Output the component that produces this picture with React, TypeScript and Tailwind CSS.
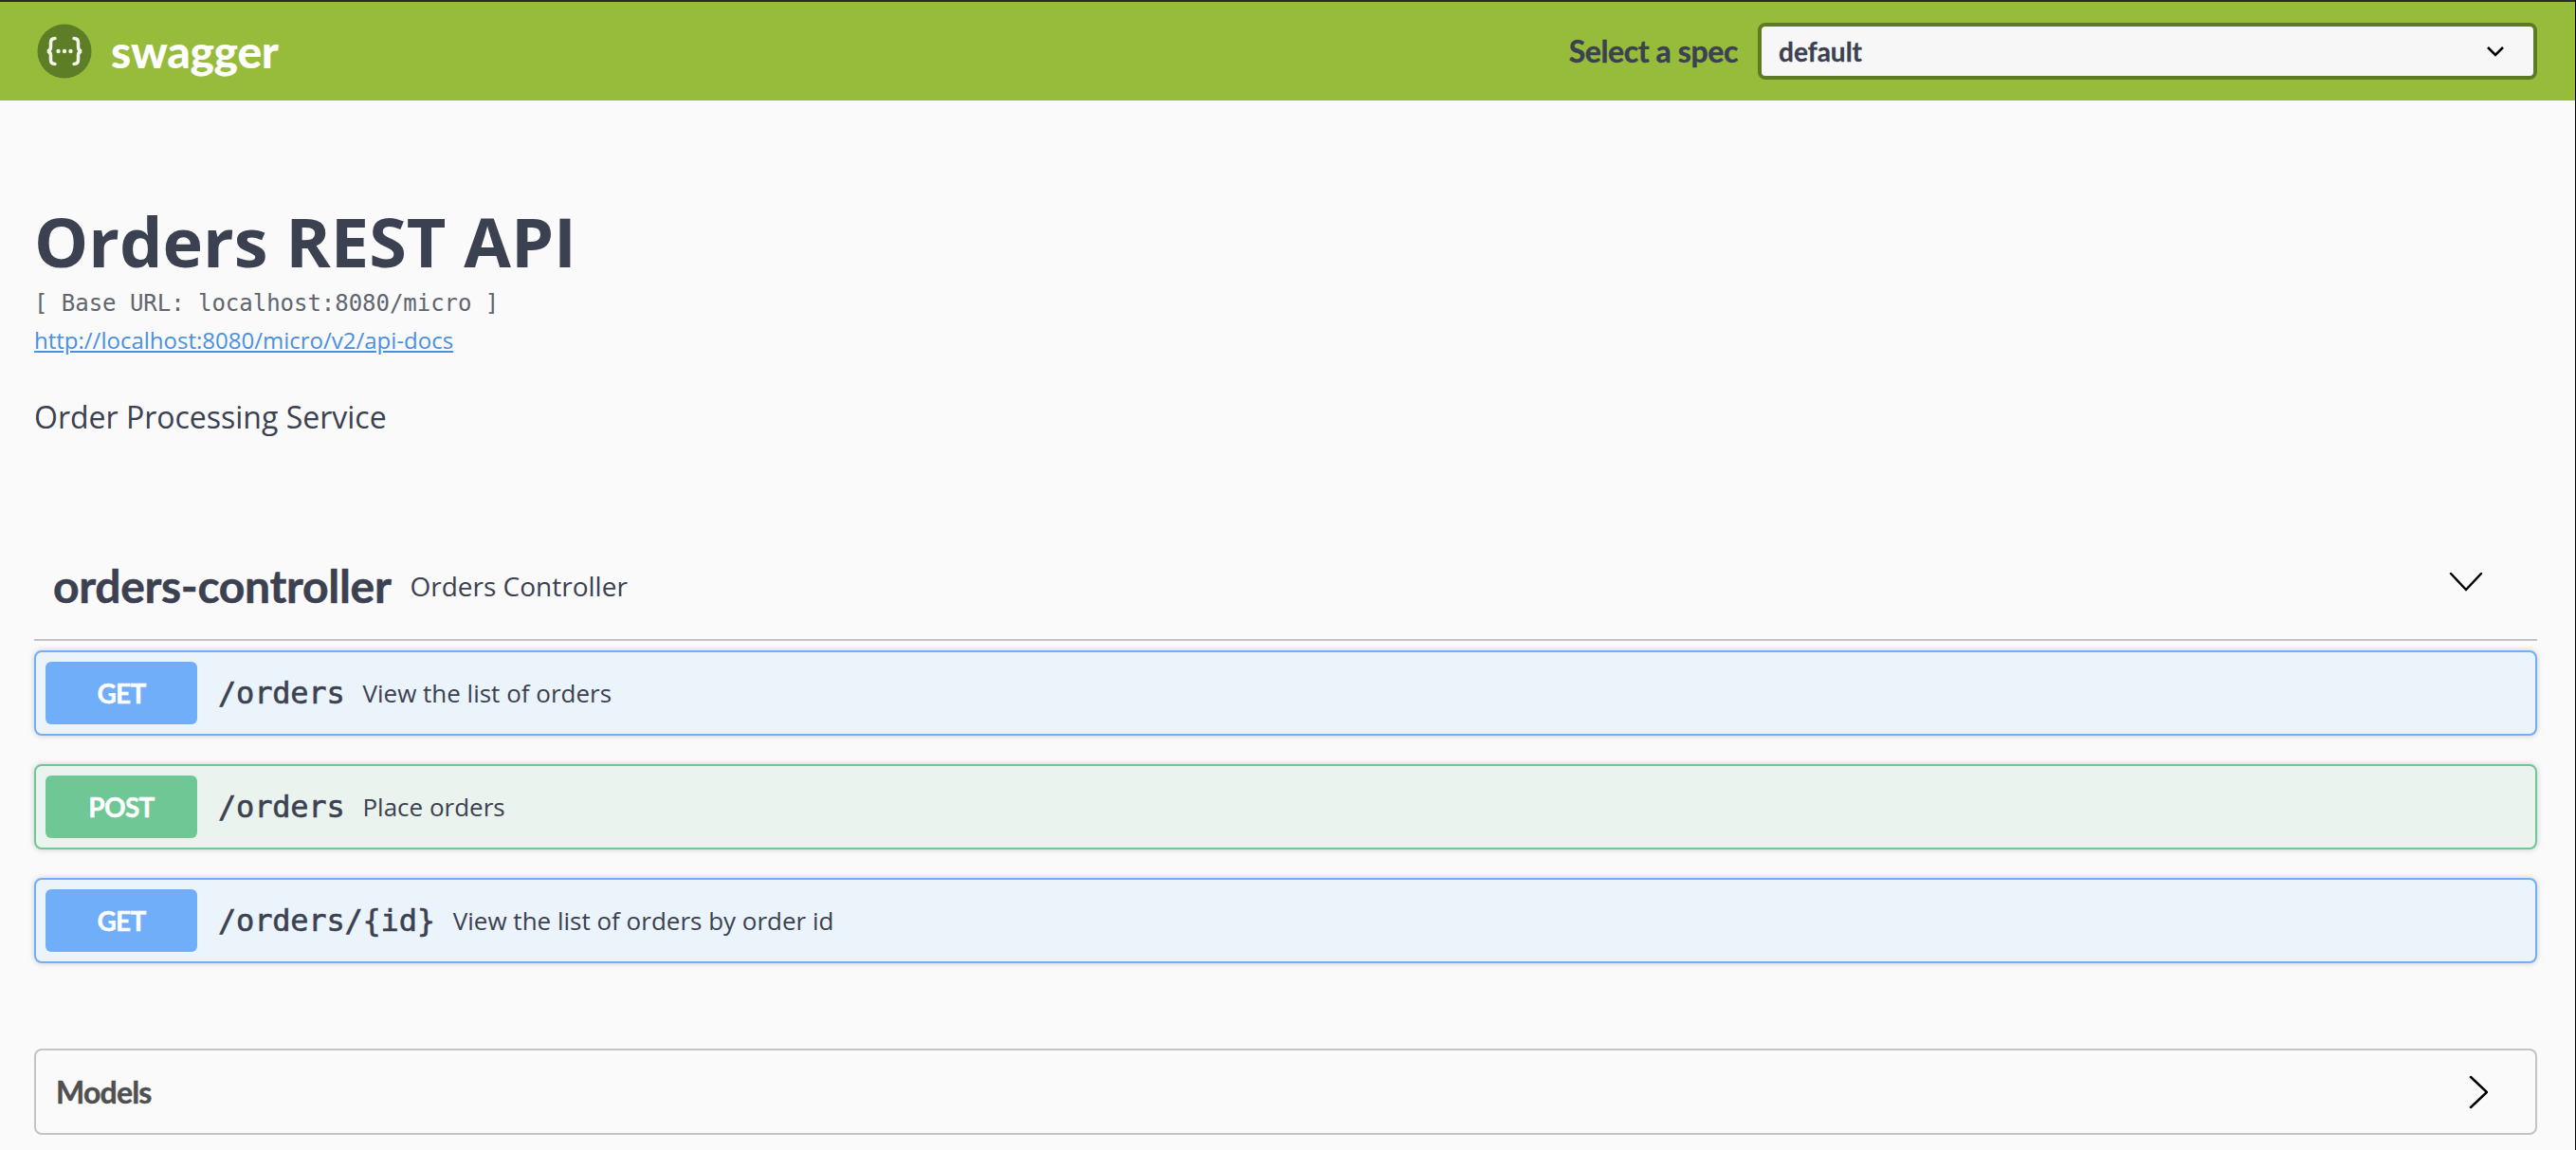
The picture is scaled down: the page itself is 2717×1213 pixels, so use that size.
const mono = "font-['DejaVu_Sans_Mono',monospace]";
const open = "font-['Open_Sans',sans-serif]";
const title = "font-['Lato',sans-serif]";

type Op = {
  method: string;
  path: string;
  summary: string;
  rowClass: string;
  badgeClass: string;
};

const ops: Op[] = [
  {
    method: 'GET',
    path: '/orders',
    summary: 'View the list of orders',
    rowClass: 'border-[#70aefa] bg-[#ebf3fb]',
    badgeClass: 'bg-[#70aefa]',
  },
  {
    method: 'POST',
    path: '/orders',
    summary: 'Place orders',
    rowClass: 'border-[#6fc795] bg-[#ebf3ee]',
    badgeClass: 'bg-[#6fc795]',
  },
  {
    method: 'GET',
    path: '/orders/{id}',
    summary: 'View the list of orders by order id',
    rowClass: 'border-[#70aefa] bg-[#ebf3fb]',
    badgeClass: 'bg-[#70aefa]',
  },
];

function Logo() {
  return (
    <svg width="58" height="58" viewBox="0 0 58 58" className="shrink-0">
      <circle cx="29" cy="29" r="28.5" fill="#5d7d27" />
      <g fill="none" stroke="#f2f5e6" strokeWidth="3.500" strokeLinecap="round">
        <path d="M19 15.500c-3.500 0-4.500 1.500-4.500 4.500v4.500c0 2.500-1 4-3.500 4.500 2.500.5 3.500 2 3.500 4.500v4.500c0 3 1 4.500 4.500 4.500" />
        <path d="M39 15.500c3.500 0 4.500 1.500 4.500 4.500v4.500c0 2.500 1 4 3.500 4.500-2.500.5-3.500 2-3.500 4.500v4.500c0 3-1 4.500-4.500 4.500" />
      </g>
      <g fill="#f2f5e6">
        <circle cx="22.500" cy="29" r="2.200" />
        <circle cx="29" cy="29" r="2.200" />
        <circle cx="35.500" cy="29" r="2.200" />
      </g>
    </svg>
  );
}

function Row({ op }: { op: Op }) {
  return (
    <div className={`flex h-[90px] items-center rounded-lg border-2 pl-[10px] shadow-[0_0_6px_rgba(0,0,0,0.19)] ${op.rowClass}`}>
      <span className={`flex h-[66px] w-[160px] shrink-0 items-center justify-center rounded-md text-[28px] font-bold tracking-[-0.7px] text-white [-webkit-text-stroke:0.4px] ${title} ${op.badgeClass}`}>
        {op.method}
      </span>
      <span className={`ml-[22px] text-[32px] tracking-[-0.2px] text-[#3b4151] [-webkit-text-stroke:0.6px_#3b4151] ${mono}`}>{op.path}</span>
      <span className={`ml-[19px] text-[26px] text-[#3b4151] ${open}`}>{op.summary}</span>
    </div>
  );
}

export default function App() {
  return (
    <div className={`min-h-[1213px] border-r border-black bg-[#fafafa] ${open}`}>
      {/* Top bar */}
      <header className="flex h-[106px] items-center border-t-2 border-[#2b2b2b] bg-[#97bc3b] pl-[39px] pr-[40px]">
        <Logo />
        <span className={`ml-[20px] text-[48px] font-black tracking-[-0.3px] text-white ${title}`}>swagger</span>
        <span className={`ml-auto text-[32px] font-bold tracking-[-0.4px] text-[#3b4151] [-webkit-text-stroke:0.4px] ${title}`}>Select a spec</span>
        <div className="ml-[21px] flex h-[60px] w-[822px] items-center justify-between rounded-lg border-4 border-[#5f7a24] bg-[#f7f7f7] pl-[18px] pr-[30px]">
          <span className={`text-[28px] font-bold text-[#3b4151] [-webkit-text-stroke:0.3px] ${title}`}>default</span>
          <svg width="20" height="12" viewBox="0 0 20 12" fill="none" stroke="#000" strokeWidth="2.500">
            <path d="M2 2l8 8 8-8" />
          </svg>
        </div>
      </header>

      <main className="pl-[36px] pr-[40px]">
        {/* Info block */}
        <h1 className="mt-[99px] text-[72px] font-bold leading-[98px] text-[#3b4151]">Orders REST API</h1>
        <p className={`mt-[1px] text-[24px] leading-[32px] tracking-[-0.03px] text-[#60656f] ${mono}`}>[ Base URL: localhost:8080/micro ]</p>
        <a className="mt-[4px] block text-[24px] leading-[38px] text-[#4990e2] underline">
          http://localhost:8080/micro/v2/api-docs
        </a>
        <p className="mt-[40px] text-[32px] leading-[44px] text-[#3b4151]">Order Processing Service</p>

        {/* Tag header */}
        <div className="mt-[99px] flex h-[115px] items-center border-b-2 border-[#c3c3c8] pl-[20px] pr-[57px]">
          <span className={`text-[48px] font-bold tracking-[-0.3px] text-[#3b4151] [-webkit-text-stroke:0.5px] ${title}`}>orders-controller</span>
          <span className="ml-[20px] text-[28px] text-[#3b4151]">Orders Controller</span>
          <svg className="ml-auto mb-[7px]" width="36" height="22" viewBox="0 0 36 22" fill="none" stroke="#000" strokeWidth="2.500" strokeLinecap="round">
            <path d="M2 2l16 17L34 2" />
          </svg>
        </div>

        <div className="mt-[10px] flex flex-col gap-[30px]">
          {ops.map((op, i) => (
            <Row key={i} op={op} />
          ))}
        </div>

        {/* Models */}
        <div className="mt-[90px] flex h-[91px] items-center justify-between rounded-lg border-2 border-[#c3c3c8] pl-[21px] pr-[50px]">
          <span className={`text-[32px] font-bold tracking-[-0.8px] text-[#505050] [-webkit-text-stroke:0.4px] ${title}`}>Models</span>
          <svg width="20" height="36" viewBox="0 0 20 36" fill="none" stroke="#000" strokeWidth="2.500" strokeLinecap="round">
            <path d="M2 2l17 16L2 34" />
          </svg>
        </div>
      </main>
    </div>
  );
}
